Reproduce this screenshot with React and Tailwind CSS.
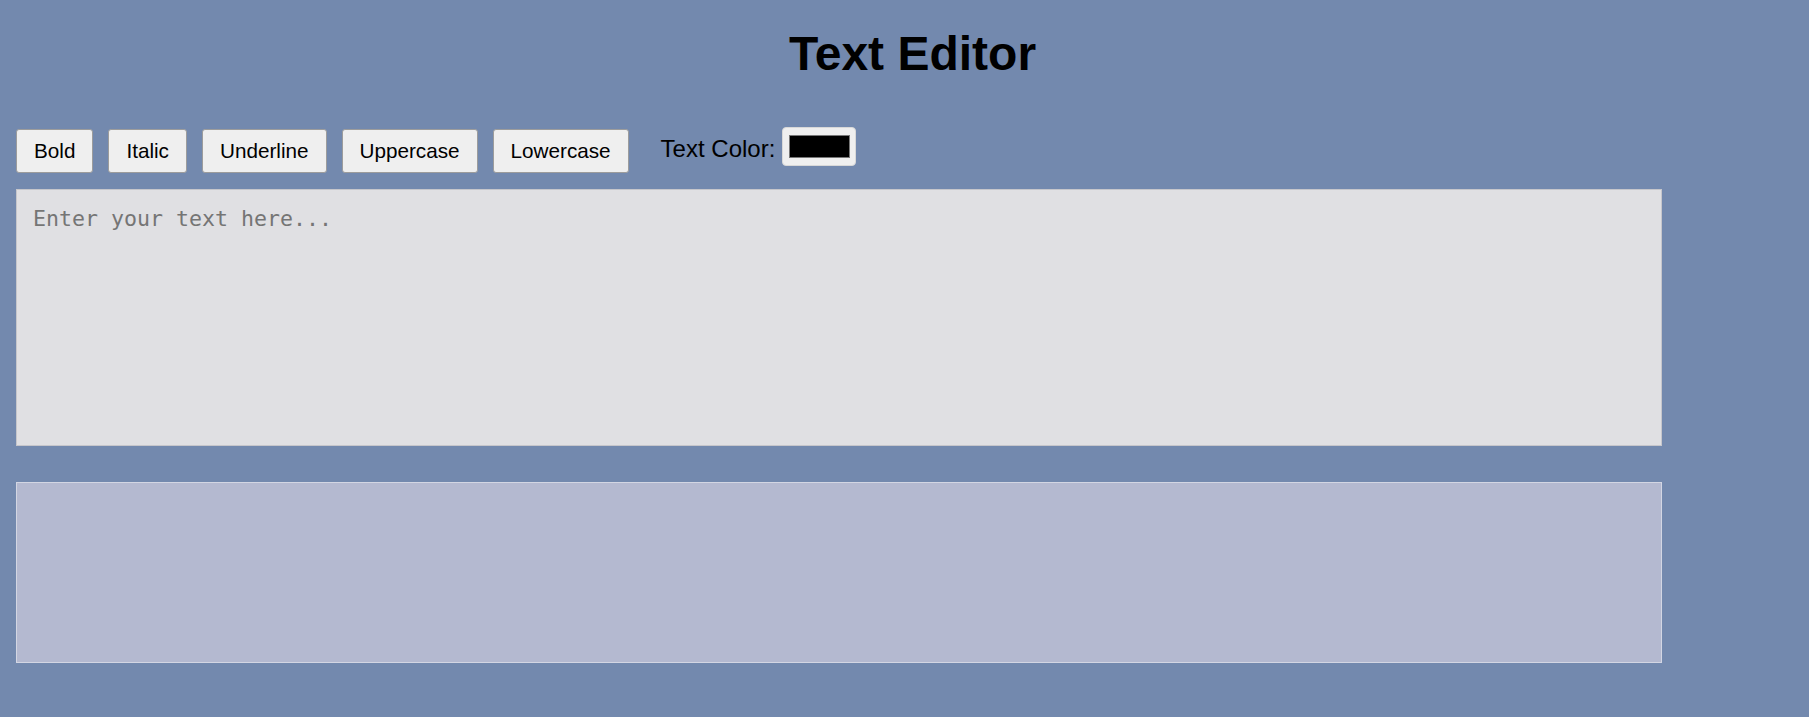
import { useState } from "react";

const buttons = ["Bold", "Italic", "Underline", "Uppercase", "Lowercase"];

export default function App() {
  const [text, setText] = useState("");

  return (
    <div
      className="min-h-screen bg-[#7389ae] pl-4 pt-[26px] text-black"
      style={{ fontFamily: '"Liberation Sans", Arial, sans-serif' }}
    >
      <h1 className="text-center text-[48px] font-bold leading-[55px]">
        Text Editor
      </h1>

      <div className="mt-[46px] flex items-start">
        {buttons.map((label) => (
          <button
            key={label}
            className="mr-[15px] mt-[2px] h-[44px] rounded-[3px] border border-[#9c9c9c] bg-[#efefef] px-[17px] text-[20.7px] leading-[24px]"
          >
            {label}
          </button>
        ))}
        <span className="ml-[17px] mt-[8px] text-[24px] leading-[28px]">
          Text Color:
        </span>
        <div className="ml-[7px] flex h-[39px] w-[74px] items-center justify-center rounded-[4px] border border-[#d8d8d8] bg-[#efefef]">
          <div className="h-[23px] w-[61px] border border-[#777] bg-black" />
        </div>
      </div>

      <textarea
        value={text}
        onChange={(e) => setText(e.target.value)}
        placeholder="Enter your text here..."
        className="mt-[16px] block h-[257px] w-[1646px] resize-none border border-[#c6c6cb] bg-[#e0e0e3] p-4 text-[21.6px] leading-[25px] text-black outline-none placeholder:text-[#757575]"
        style={{ fontFamily: '"DejaVu Sans Mono", "Liberation Mono", monospace' }}
      />

      <div className="mt-[36px] h-[181px] w-[1646px] border border-[#d3d6e3] bg-[#b4b9d0] p-4 text-[20px]">
        {text}
      </div>
    </div>
  );
}
